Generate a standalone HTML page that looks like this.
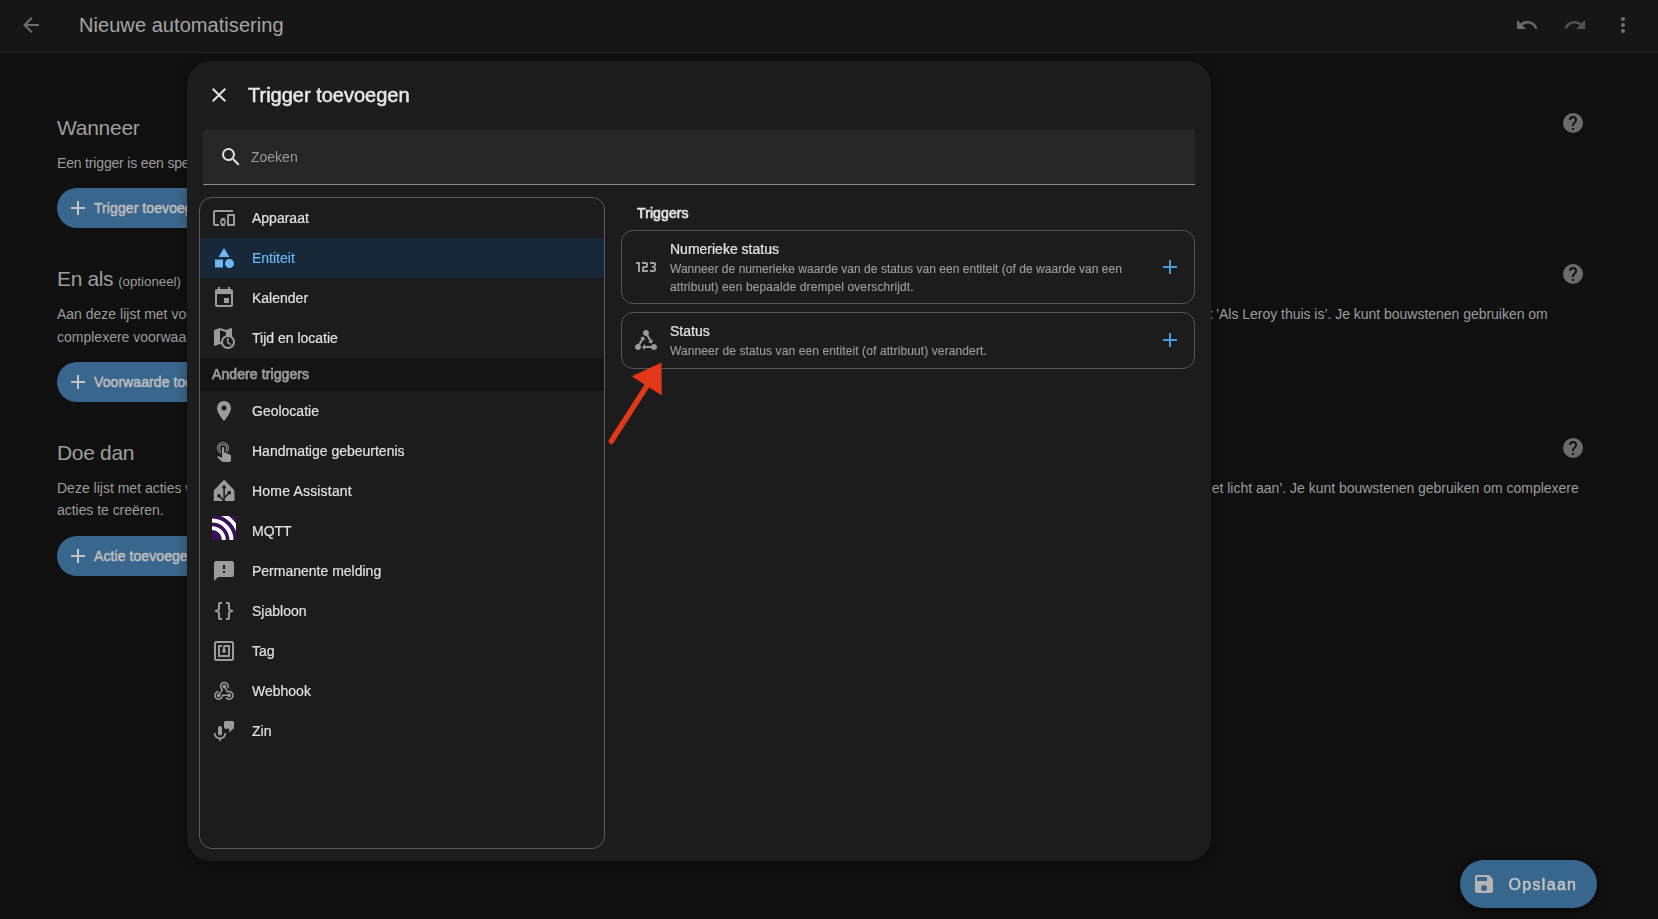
<!DOCTYPE html>
<html lang="nl">
<head>
<meta charset="utf-8">
<title>Nieuwe automatisering</title>
<style>
*{box-sizing:border-box;margin:0;padding:0}
html,body{width:1658px;height:919px;overflow:hidden;background:#101010}
body{position:relative;font-family:"Liberation Sans",Arial,sans-serif;color:#e1e1e1;font-size:14px}
svg{display:block}
.abs{position:absolute}
.t{position:absolute;white-space:nowrap;line-height:1}
.med{-webkit-text-stroke:.5px currentColor}
.appbar{position:absolute;left:0;top:0;width:1658px;height:53px;background:#161616;border-bottom:1px solid #252525}
.appbar .title{left:79px;top:15px;font-size:20px;color:#a5a5a5;letter-spacing:.06px}
.ic{position:absolute;width:24px;height:24px}
.ic svg{width:24px;height:24px}
.sec-h{font-size:21px;color:#9e9e9e}
.sec-h small{font-size:13.3px;color:#9a9a9a;margin-left:-.6px;letter-spacing:0}
.sec-p{font-size:14px;color:#9c9c9c;letter-spacing:0}
.pill{position:absolute;left:57px;width:200px;height:40px;border-radius:20px;background:#39668c}
.pill .lbl{left:37px;top:13px;font-size:14px;color:#bebebe;letter-spacing:.08px}
.pill .ic{left:9px;top:8px}
.fab{will-change:transform;position:absolute;left:1460px;top:860px;width:137px;height:48px;border-radius:24px;background:#38678d;box-shadow:0 3px 8px rgba(0,0,0,.5)}
.fab .lbl{left:48.5px;top:16.5px;font-size:16px;color:#c4c4c4;letter-spacing:1.32px}
.fab .ic{left:12px;top:12px}
/* ---------- dialog ---------- */
.dialog{will-change:transform;position:absolute;left:187px;top:61px;width:1024px;height:800px;border-radius:24px;background:#1c1c1c;box-shadow:0 3px 11px rgba(0,0,0,.32)}
.dialog .dtitle{left:61px;top:24.3px;font-size:20px;color:#e6e6e6;-webkit-text-stroke:.55px currentColor}
.search{position:absolute;left:16px;top:68px;width:992px;height:56px;background:#262626;border-radius:4px 4px 0 0;border-bottom:1px solid #8b8b8b}
.search .ph{left:48px;top:21px;font-size:14px;color:#9a9a9a}
.nav{position:absolute;left:12px;top:136px;width:406px;height:652px;border:1px solid #5a5a5a;border-radius:13px;overflow:hidden}
.nav .row{position:absolute;left:0;width:404px;height:40px}
.nav .row .ic{left:12px;top:8px}
.nav .row .lbl{left:52px;top:13px;font-size:14px;color:#e1e1e1;-webkit-text-stroke:.2px currentColor}
.nav .row.sel{background:#172838}
.nav .row.sel .lbl{color:#6cb6f3}
.nav .sub{position:absolute;left:0;top:160px;width:404px;height:33px;background:#141414}
.nav .sub .lbl{left:12px;top:9px;font-size:14px;color:#9a9a9a;letter-spacing:.1px;-webkit-text-stroke:.75px currentColor}
.right .hd{left:450px;top:145px;font-size:14px;color:#e1e1e1;letter-spacing:.1px;-webkit-text-stroke:.7px currentColor}
.card{position:absolute;left:434px;width:574px;border:1px solid #555;border-radius:12px}
.card .name{left:48px;font-size:14px;color:#e4e4e4;-webkit-text-stroke:.22px currentColor}
.card .desc{left:48px;font-size:12px;color:#9b9b9b;-webkit-text-stroke:.15px currentColor}
.card .ic.lead{left:12px}
.card .ic.plus{left:536px}
</style>
</head>
<body>

<!-- app header -->
<div class="appbar">
  <div class="ic" style="left:19px;top:13px"><svg viewBox="0 0 24 24"><path fill="#6e6e6e" d="M20,11V13H8L13.5,18.5L12.08,19.92L4.16,12L12.08,4.08L13.5,5.5L8,11H20Z"/></svg></div>
  <span class="t title" id="t-title">Nieuwe automatisering</span>
  <div class="ic" style="left:1515px;top:13px"><svg viewBox="0 0 24 24"><path fill="#6a6a6a" d="M12.5,8C9.85,8 7.45,9 5.6,10.6L2,7V16H11L7.38,12.38C8.77,11.22 10.54,10.5 12.5,10.5C16.04,10.5 19.05,12.81 20.1,16L22.47,15.22C21.08,11.03 17.15,8 12.5,8Z"/></svg></div>
  <div class="ic" style="left:1563px;top:13px"><svg viewBox="0 0 24 24"><path fill="#525252" d="M18.4,10.6C16.55,9 14.15,8 11.5,8C6.85,8 2.92,11.03 1.54,15.22L3.9,16C4.95,12.81 7.95,10.5 11.5,10.5C13.45,10.5 15.23,11.22 16.62,12.38L13,16H22V7L18.4,10.6Z"/></svg></div>
  <div class="ic" style="left:1611px;top:13px"><svg viewBox="0 0 24 24"><path fill="#727272" d="M12,16A2,2 0 0,1 14,18A2,2 0 0,1 12,20A2,2 0 0,1 10,18A2,2 0 0,1 12,16M12,10A2,2 0 0,1 14,12A2,2 0 0,1 12,14A2,2 0 0,1 10,12A2,2 0 0,1 12,10M12,4A2,2 0 0,1 14,6A2,2 0 0,1 12,8A2,2 0 0,1 10,6A2,2 0 0,1 12,4Z"/></svg></div>
</div>

<!-- editor sections behind the dialog -->
<span class="t sec-h" id="t-h1" style="left:57px;top:117px;letter-spacing:-.27px">Wanneer</span>
<span class="t sec-p" id="t-p1" style="left:57px;top:156px;letter-spacing:-.17px">Een trigger is een specifieke gebeurtenis die de automatisering start.</span>
<div class="pill" style="top:188px"><div class="ic"><svg viewBox="0 0 24 24"><path fill="#c4c4c4" d="M19,13H13V19H11V13H5V11H11V5H13V11H19V13Z"/></svg></div><span class="t lbl med" id="t-b1">Trigger toevoegen</span></div>
<div class="ic" style="left:1561px;top:111px"><svg viewBox="0 0 24 24"><path fill="#6b6b6b" d="M15.07,11.25L14.17,12.17C13.45,12.89 13,13.5 13,15H11V14.5C11,13.39 11.45,12.39 12.17,11.67L13.41,10.41C13.78,10.05 14,9.55 14,9C14,7.89 13.1,7 12,7A2,2 0 0,0 10,9H8A4,4 0 0,1 12,5A4,4 0 0,1 16,9C16,9.88 15.64,10.67 15.07,11.25M13,19H11V17H13M12,2A10,10 0 0,0 2,12A10,10 0 0,0 12,22A10,10 0 0,0 22,12C22,6.47 17.5,2 12,2Z"/></svg></div>

<span class="t sec-h" id="t-h2" style="left:57px;top:268px;letter-spacing:-.35px">En als <small>(optioneel)</small></span>
<span class="t sec-p" id="t-p2a" style="left:57px;top:307px">Aan deze lijst met voorwaarden moet worden voldaan</span>
<span class="t sec-p" id="t-p2r" style="right:110.3px;top:307px;letter-spacing:-.025px"><span style="position:relative;left:1.6px">:</span> ’Als Leroy thuis is’. Je kunt bouwstenen gebruiken om</span>
<span class="t sec-p" id="t-p2b" style="left:57px;top:330px">complexere voorwaarden te creëren.</span>
<div class="pill" style="top:362px"><div class="ic"><svg viewBox="0 0 24 24"><path fill="#c4c4c4" d="M19,13H13V19H11V13H5V11H11V5H13V11H19V13Z"/></svg></div><span class="t lbl med" id="t-b2">Voorwaarde toevoegen</span></div>
<div class="ic" style="left:1561px;top:262px"><svg viewBox="0 0 24 24"><path fill="#6b6b6b" d="M15.07,11.25L14.17,12.17C13.45,12.89 13,13.5 13,15H11V14.5C11,13.39 11.45,12.39 12.17,11.67L13.41,10.41C13.78,10.05 14,9.55 14,9C14,7.89 13.1,7 12,7A2,2 0 0,0 10,9H8A4,4 0 0,1 12,5A4,4 0 0,1 16,9C16,9.88 15.64,10.67 15.07,11.25M13,19H11V17H13M12,2A10,10 0 0,0 2,12A10,10 0 0,0 12,22A10,10 0 0,0 22,12C22,6.47 17.5,2 12,2Z"/></svg></div>

<span class="t sec-h" id="t-h3" style="left:57px;top:442px;letter-spacing:-.33px">Doe dan</span>
<span class="t sec-p" id="t-p3a" style="left:57px;top:481px">Deze lijst met acties wordt uitgevoerd</span>
<span class="t sec-p" id="t-p3r" style="right:79.3px;top:481px;letter-spacing:-.02px">et licht aan’. Je kunt bouwstenen gebruiken om complexere</span>
<span class="t sec-p" id="t-p3b" style="left:57px;top:503px;letter-spacing:-.04px">acties te creëren.</span>
<div class="pill" style="top:536px"><div class="ic"><svg viewBox="0 0 24 24"><path fill="#c4c4c4" d="M19,13H13V19H11V13H5V11H11V5H13V11H19V13Z"/></svg></div><span class="t lbl med" id="t-b3">Actie toevoegen</span></div>
<div class="ic" style="left:1561px;top:436px"><svg viewBox="0 0 24 24"><path fill="#6b6b6b" d="M15.07,11.25L14.17,12.17C13.45,12.89 13,13.5 13,15H11V14.5C11,13.39 11.45,12.39 12.17,11.67L13.41,10.41C13.78,10.05 14,9.55 14,9C14,7.89 13.1,7 12,7A2,2 0 0,0 10,9H8A4,4 0 0,1 12,5A4,4 0 0,1 16,9C16,9.88 15.64,10.67 15.07,11.25M13,19H11V17H13M12,2A10,10 0 0,0 2,12A10,10 0 0,0 12,22A10,10 0 0,0 22,12C22,6.47 17.5,2 12,2Z"/></svg></div>

<!-- save button -->
<div class="fab"><div class="ic"><svg viewBox="0 0 24 24"><path fill="#b4b4b4" d="M15,9H5V5H15M12,19A3,3 0 0,1 9,16A3,3 0 0,1 12,13A3,3 0 0,1 15,16A3,3 0 0,1 12,19M17,3H5C3.89,3 3,3.9 3,5V19A2,2 0 0,0 5,21H19A2,2 0 0,0 21,19V7L17,3Z"/></svg></div><span class="t lbl med" id="t-save">Opslaan</span></div>

<!-- dialog -->
<div class="dialog">
  <div class="ic" style="left:20px;top:22px"><svg viewBox="0 0 24 24"><path fill="#e1e1e1" d="M19,6.41L17.59,5L12,10.59L6.41,5L5,6.41L10.59,12L5,17.59L6.41,19L12,13.41L17.59,19L19,17.59L13.41,12L19,6.41Z"/></svg></div>
  <span class="t dtitle" id="t-dtitle">Trigger toevoegen</span>
  <div class="search">
    <div class="ic" style="left:16px;top:16px"><svg viewBox="0 0 24 24"><path fill="#e1e1e1" d="M9.5,3A6.5,6.5 0 0,1 16,9.5C16,11.11 15.41,12.59 14.44,13.73L14.71,14H15.5L20.5,19L19,20.5L14,15.5V14.71L13.73,14.44C12.59,15.41 11.11,16 9.5,16A6.5,6.5 0 0,1 3,9.5A6.5,6.5 0 0,1 9.5,3M9.5,5C7,5 5,7 5,9.5C5,12 7,14 9.5,14C12,14 14,12 14,9.5C14,7 12,5 9.5,5Z"/></svg></div>
    <span class="t ph" id="t-ph">Zoeken</span>
  </div>

  <!-- NAV -->
  <div class="nav" id="nav">
    <div class="row " style="top:0px"><div class="ic"><svg viewBox="0 0 24 24"><path fill="#9b9b9b" d="M3,6H21V4H3A2,2 0 0,0 1,6V18A2,2 0 0,0 3,20H7V18H3V6M13,12H9V13.78C8.39,14.33 8,15.11 8,16C8,16.89 8.39,17.67 9,18.22V20H13V18.22C13.61,17.67 14,16.88 14,16C14,15.12 13.61,14.33 13,13.78V12M11,17.5A1.5,1.5 0 0,1 9.5,16A1.5,1.5 0 0,1 11,14.5A1.5,1.5 0 0,1 12.5,16A1.5,1.5 0 0,1 11,17.5M22,8H16A1,1 0 0,0 15,9V19A1,1 0 0,0 16,20H22A1,1 0 0,0 23,19V9A1,1 0 0,0 22,8M21,18H17V10H21V18Z"/></svg></div><span class="t lbl" id="t-n0">Apparaat</span></div>
    <div class="row sel" style="top:40px"><div class="ic"><svg viewBox="0 0 24 24"><path fill="#6cb6f3" d="M11,13.5V21.5H3V13.5H11M12,2L17.5,11H6.5L12,2M17.5,13C20,13 22,15 22,17.5C22,20 20,22 17.5,22C15,22 13,20 13,17.5C13,15 15,13 17.5,13Z"/></svg></div><span class="t lbl" id="t-n1">Entiteit</span></div>
    <div class="row " style="top:80px"><div class="ic"><svg viewBox="0 0 24 24"><path fill="#9b9b9b" d="M19,19H5V8H19M16,1V3H8V1H6V3H5C3.89,3 3,3.89 3,5V19A2,2 0 0,0 5,21H19A2,2 0 0,0 21,19V5C21,3.89 20.1,3 19,3H18V1M17,12H12V17H17V12Z"/></svg></div><span class="t lbl" id="t-n2">Kalender</span></div>
    <div class="row " style="top:120px"><div class="ic"><svg viewBox="0 0 24 24"><path fill="#9b9b9b" d="M15,12H16.5V16.25L19.36,17.94L18.61,19.16L15,17V12M23,16A7,7 0 0,1 16,23C13,23 10.4,21.08 9.42,18.4L8,17.9L2.66,19.97L2.5,20A0.5,0.5 0 0,1 2,19.5V4.38C2,4.15 2.15,3.97 2.36,3.9L8,2L14,4.1L19.34,2.03L19.5,2A0.5,0.5 0 0,1 20,2.5V10.25C21.81,11.5 23,13.62 23,16M9,16C9,12.83 11.11,10.15 14,9.29V6.21L8,4.1V15.89L9,16.24C9,16.16 9,16.08 9,16M16,11A5,5 0 0,0 11,16A5,5 0 0,0 16,21A5,5 0 0,0 21,16A5,5 0 0,0 16,11Z"/></svg></div><span class="t lbl" id="t-n3">Tijd en locatie</span></div>
    <div class="sub"><span class="t lbl med" id="t-sub">Andere triggers</span></div>
    <div class="row " style="top:193px"><div class="ic"><svg viewBox="0 0 24 24"><path fill="#9b9b9b" d="M12,11.5A2.5,2.5 0 0,1 9.5,9A2.5,2.5 0 0,1 12,6.5A2.5,2.5 0 0,1 14.5,9A2.5,2.5 0 0,1 12,11.5M12,2A7,7 0 0,0 5,9C5,14.25 12,22 12,22C12,22 19,14.25 19,9A7,7 0 0,0 12,2Z"/></svg></div><span class="t lbl" id="t-n4">Geolocatie</span></div>
    <div class="row " style="top:233px"><div class="ic"><svg viewBox="0 0 24 24"><path fill="#9b9b9b" d="M10,9A1,1 0 0,1 11,8A1,1 0 0,1 12,9V13.47L13.21,13.6L18.15,15.79C18.68,16.03 19,16.56 19,17.14V21.5C18.97,22.32 18.32,22.97 17.5,23H11C10.62,23 10.26,22.85 10,22.57L5.1,18.37L5.84,17.6C6.03,17.39 6.3,17.28 6.58,17.28H6.8L10,19V9M11,5A4,4 0 0,1 15,9C15,10.5 14.2,11.77 13,12.46V11.24C13.61,10.69 14,9.89 14,9A3,3 0 0,0 11,6A3,3 0 0,0 8,9C8,9.89 8.39,10.69 9,11.24V12.46C7.8,11.77 7,10.5 7,9A4,4 0 0,1 11,5M11,3A6,6 0 0,1 17,9C17,10.7 16.29,12.23 15.16,13.33L14.16,12.88C15.28,11.96 16,10.56 16,9A5,5 0 0,0 11,4A5,5 0 0,0 6,9C6,11.05 7.23,12.81 9,13.58V14.66C6.67,13.83 5,11.61 5,9A6,6 0 0,1 11,3Z"/></svg></div><span class="t lbl" id="t-n5">Handmatige gebeurtenis</span></div>
    <div class="row " style="top:273px"><div class="ic"><svg viewBox="0 0 24 24"><path transform="translate(1.75 .92) scale(.863 .894)" fill="#9b9b9b" d="M22.939 10.627 13.061.749a1.505 1.505 0 0 0-2.121 0l-9.879 9.878C.478 11.21 0 12.363 0 13.187v9c0 .826.675 1.5 1.5 1.5h9.227l-4.063-4.062a2.034 2.034 0 0 1-.664.113c-1.13 0-2.05-.92-2.05-2.05s.92-2.05 2.05-2.05 2.05.92 2.05 2.05c0 .233-.041.456-.113.665l3.163 3.163V9.928a2.05 2.05 0 0 1-1.15-1.84c0-1.13.92-2.05 2.05-2.05s2.05.92 2.05 2.05a2.05 2.05 0 0 1-1.15 1.84v8.127l3.146-3.146A2.051 2.051 0 0 1 18 12.239c1.13 0 2.05.92 2.05 2.05s-.92 2.05-2.05 2.05a2.030 2.030 0 0 1-.709-.13L12.9 20.602v3.088h9.6c.825 0 1.5-.675 1.5-1.5v-9c0-.825-.477-1.977-1.061-2.561z"/></svg></div><span class="t lbl" id="t-n6" style="letter-spacing:.19px">Home Assistant</span></div>
    <div class="row " style="top:313px"><div class="ic" style="top:5px"><svg viewBox="0 0 24 24"><defs><clipPath id="mq"><rect x="0" y="0" width="24" height="24" rx="1"/></clipPath></defs><g clip-path="url(#mq)"><rect width="24" height="24" fill="#3c1058"/><g fill="none" stroke="#fff"><circle cx="0" cy="24" r="11.9" stroke-width="3.8"/><circle cx="0" cy="24" r="19.4" stroke-width="4"/><circle cx="0" cy="24" r="27.3" stroke-width="3.6"/></g></g></svg></div><span class="t lbl" id="t-n7">MQTT</span></div>
    <div class="row " style="top:353px"><div class="ic"><svg viewBox="0 0 24 24"><path fill="#9b9b9b" d="M13,10H11V6H13M13,14H11V12H13M20,2H4A2,2 0 0,0 2,4V22L6,18H20A2,2 0 0,0 22,16V4C22,2.89 21.1,2 20,2Z"/></svg></div><span class="t lbl" id="t-n8">Permanente melding</span></div>
    <div class="row " style="top:393px"><div class="ic"><svg viewBox="0 0 24 24"><path fill="#9b9b9b" d="M8,3A2,2 0 0,0 6,5V9A2,2 0 0,1 4,11H3V13H4A2,2 0 0,1 6,15V19A2,2 0 0,0 8,21H10V19H8V14A2,2 0 0,0 6,12A2,2 0 0,0 8,10V5H10V3M16,3A2,2 0 0,1 18,5V9A2,2 0 0,0 20,11H21V13H20A2,2 0 0,0 18,15V19A2,2 0 0,1 16,21H14V19H16V14A2,2 0 0,1 18,12A2,2 0 0,1 16,10V5H14V3H16Z"/></svg></div><span class="t lbl" id="t-n9">Sjabloon</span></div>
    <div class="row " style="top:433px"><div class="ic"><svg viewBox="0 0 24 24"><path fill="#9b9b9b" d="M18,6H13A2,2 0 0,0 11,8V10.28C10.41,10.62 10,11.26 10,12A2,2 0 0,0 12,14C13.11,14 14,13.1 14,12C14,11.26 13.6,10.62 13,10.28V8H16V16H8V8H10V6H8L6,6V18H18M20,20H4V4H20M20,2H4A2,2 0 0,0 2,4V20A2,2 0 0,0 4,22H20C21.11,22 22,21.11 22,20V4C22,2.89 21.11,2 20,2Z"/></svg></div><span class="t lbl" id="t-n10">Tag</span></div>
    <div class="row " style="top:473px"><div class="ic"><svg viewBox="0 0 24 24"><path fill="#9b9b9b" d="M10.46,19C9,21.07 6.15,21.59 4.09,20.15C2.04,18.71 1.56,15.84 3,13.75C3.87,12.5 5.21,11.83 6.58,11.77L6.63,13.2C5.72,13.27 4.84,13.74 4.27,14.56C3.27,16 3.58,17.94 4.95,18.91C6.33,19.87 8.26,19.5 9.26,18.07C9.57,17.62 9.75,17.13 9.82,16.63V15.62L15.4,15.58L15.47,15.47C16,14.55 17.15,14.23 18.05,14.75C18.95,15.27 19.26,16.43 18.73,17.35C18.2,18.26 17.04,18.58 16.14,18.06C15.73,17.83 15.44,17.46 15.31,17.04L11.24,17.06C11.13,17.73 10.87,18.38 10.46,19M17.74,11.86C20.27,12.17 22.07,14.44 21.76,16.93C21.45,19.43 19.15,21.2 16.62,20.89C15.13,20.71 13.9,19.86 13.19,18.68L14.43,17.96C14.92,18.73 15.75,19.28 16.75,19.41C18.5,19.62 20.05,18.43 20.26,16.76C20.47,15.09 19.23,13.56 17.5,13.35C16.96,13.29 16.44,13.36 15.97,13.53L15.12,13.97L12.54,9.2H12.32C11.26,9.16 10.44,8.29 10.47,7.25C10.5,6.21 11.4,5.4 12.45,5.44C13.5,5.5 14.33,6.35 14.3,7.39C14.28,7.83 14.11,8.23 13.84,8.54L15.74,12.05C16.36,11.85 17.04,11.78 17.74,11.86M8.25,9.14C7.25,6.79 8.31,4.1 10.62,3.12C12.94,2.14 15.62,3.25 16.62,5.6C17.21,6.97 17.09,8.47 16.42,9.67L15.18,8.95C15.6,8.14 15.67,7.15 15.27,6.22C14.59,4.62 12.78,3.85 11.23,4.5C9.67,5.16 8.97,7 9.65,8.6C9.93,9.26 10.4,9.77 10.97,10.11L11.36,10.32L8.29,15.31C8.32,15.36 8.36,15.42 8.39,15.5C8.88,16.41 8.54,17.56 7.62,18.05C6.71,18.54 5.56,18.18 5.06,17.24C4.57,16.31 4.91,15.16 5.83,14.67C6.22,14.46 6.65,14.41 7.06,14.5L9.37,10.73C8.9,10.3 8.5,9.76 8.25,9.14Z"/></svg></div><span class="t lbl" id="t-n11">Webhook</span></div>
    <div class="row " style="top:513px"><div class="ic"><svg viewBox="0 0 24 24"><path fill="#9b9b9b" d="M8,7a2,2 0 0 1 2,2v5.4a2,2 0 0 1 -4,0v-5.4a2,2 0 0 1 2,-2zM1.8,14h1.7a4.5,4.5 0 0 0 9,0h1.7a6.2,6.2 0 0 1 -5.35,6.14V22h-1.7v-1.86a6.2,6.2 0 0 1 -5.35,-6.14zM13.5,2h7a1.5,1.5 0 0 1 1.5,1.5v5.4l-4.8,4.6v-3.8h-3.7a1.5,1.5 0 0 1 -1.5,-1.5v-4.7a1.5,1.5 0 0 1 1.5,-1.5z"/></svg></div><span class="t lbl" id="t-n12">Zin</span></div>
  </div>

  <!-- RIGHT -->
  <div class="right" id="right">
    <span class="t hd med" id="t-hd">Triggers</span>
    <div class="card" style="top:169px;height:74px">
      <div class="ic lead" style="top:24px"><svg viewBox="0 0 24 24"><path fill="#a0a0a0" d="M4,17V9H2V7H6V17H4M22,15C22,16.11 21.1,17 20,17H16V15H20V13H18V11H20V9H16V7H20A2,2 0 0,1 22,9V10.5A1.5,1.5 0 0,1 20.5,12A1.5,1.5 0 0,1 22,13.5V15M14,15V17H8V13C8,11.89 8.9,11 10,11H12V9H8V7H12A2,2 0 0,1 14,9V11C14,12.11 13.1,13 12,13H10V15H14Z"/></svg></div>
      <span class="t name" id="t-c1n" style="top:11px">Numerieke status</span>
      <span class="t desc" id="t-c1a" style="top:32px;letter-spacing:.035px">Wanneer de numerieke waarde van de status van een entiteit (of de waarde van een</span>
      <span class="t desc" id="t-c1b" style="top:50px;letter-spacing:.125px">attribuut) een bepaalde drempel overschrijdt.</span>
      <div class="ic plus" style="top:24px"><svg viewBox="0 0 24 24"><path fill="#4b99d9" d="M19,13H13V19H11V13H5V11H11V5H13V11H19V13Z"/></svg></div>
    </div>
    <div class="card" style="top:251px;height:57px">
      <div class="ic lead" style="top:15px"><svg viewBox="0 0 24 24"><path fill="#9b9b9b" d="M6.27 17.05C6.72 17.58 7 18.25 7 19C7 20.66 5.66 22 4 22S1 20.66 1 19 2.34 16 4 16C4.18 16 4.36 16 4.53 16.05L7.6 10.69L5.86 9.7L9.95 8.58L11.07 12.67L9.33 11.68L6.27 17.05M20 16C18.7 16 17.6 16.84 17.18 18H11V16L8 19L11 22V20H17.18C17.6 21.16 18.7 22 20 22C21.66 22 23 20.66 23 19S21.66 16 20 16M12 8C12.18 8 12.36 8 12.53 7.95L15.6 13.31L13.86 14.3L17.95 15.42L19.07 11.33L17.33 12.32L14.27 6.95C14.72 6.42 15 5.75 15 5C15 3.34 13.66 2 12 2S9 3.34 9 5 10.34 8 12 8Z"/></svg></div>
      <span class="t name" id="t-c2n" style="top:11px">Status</span>
      <span class="t desc" id="t-c2a" style="top:31.5px;letter-spacing:.108px">Wanneer de status van een entiteit (of attribuut) verandert.</span>
      <div class="ic plus" style="top:15px"><svg viewBox="0 0 24 24"><path fill="#4b99d9" d="M19,13H13V19H11V13H5V11H11V5H13V11H19V13Z"/></svg></div>
    </div>
  </div>
</div>

<!-- ARROW -->
<svg class="abs" style="left:600px;top:350px;width:80px;height:100px" viewBox="600 350 80 100"><line x1="611.3" y1="441.3" x2="650" y2="381" stroke="#e03818" stroke-width="5.4" stroke-linecap="round"/><polygon points="660.8,363.6 633.2,376.4 661,394" fill="#e03818" stroke="#e03818" stroke-width="1.5" stroke-linejoin="round"/></svg>

</body>
</html>
